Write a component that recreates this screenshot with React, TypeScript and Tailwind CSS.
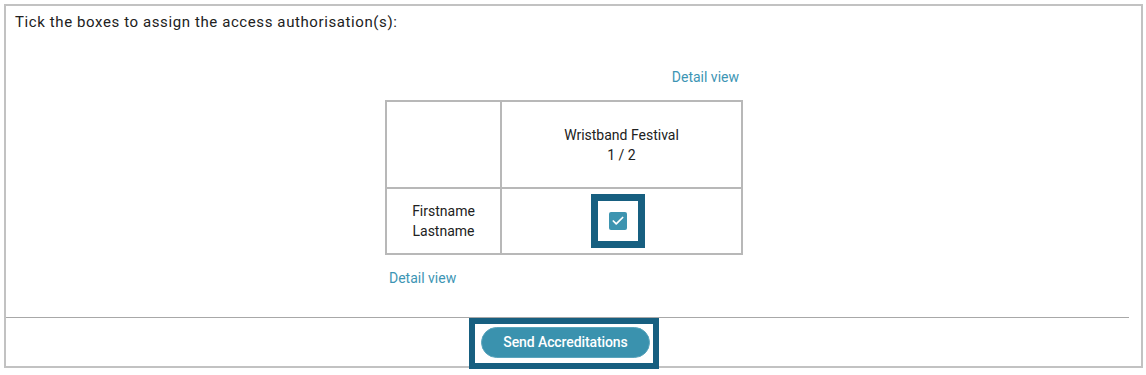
import { Check } from 'lucide-react';

const DetailLink = ({ align }: { align: 'left' | 'right' }) => (
  <div
    className={
      'text-[14px] leading-[20px] ' + (align === 'right' ? 'text-right pr-[4px]' : 'text-left pl-[4px]')
    }
  >
    <a href="#" className="text-[#3d95b4]">
      Detail view
    </a>
  </div>
);

export default function App() {
  return (
    <div className="w-[1146px] h-[375px] bg-white pt-[4px] pl-[4px] font-['Roboto',sans-serif] text-[#212121]">
      <div className="w-[1139px] h-[364px] border-2 border-[#c2c2c2] flex flex-col">
        <p className="pl-[9px] pt-[6px] text-[15px] leading-[20px] tracking-[0.6px]">
          Tick the boxes to assign the access authorisation(s):
        </p>

        <div className="flex flex-col items-center pr-[19px] mt-[35px]">
          <div className="w-[358px]">
            <DetailLink align="right" />

            <div className="mt-[13px] border-2 border-[#b8b8b8] text-[14px] leading-[20px] text-center">
              <div className="flex h-[87px] border-b-2 border-[#b8b8b8]">
                <div className="w-[115px] border-r-2 border-[#b8b8b8]" />
                <div className="flex-1 flex flex-col items-center justify-center">
                  <span>Wristband Festival</span>
                  <span>1 / 2</span>
                </div>
              </div>
              <div className="flex h-[64px]">
                <div className="w-[115px] border-r-2 border-[#b8b8b8] flex flex-col items-center justify-center">
                  <span>Firstname</span>
                  <span>Lastname</span>
                </div>
                <div className="flex-1 flex items-center justify-center pr-[8px]">
                  <div className="border-[7px] border-[#175f80] w-[54px] h-[54px] flex items-center justify-center">
                    <span className="w-[18px] h-[18px] rounded-[2px] bg-[#3d94b0] flex items-center justify-center">
                      <Check size={14} strokeWidth={3} className="text-white" />
                    </span>
                  </div>
                </div>
              </div>
            </div>

            <div className="mt-[13px]">
              <DetailLink align="left" />
            </div>
          </div>
        </div>

        <hr className="mt-[29px] mr-[12px] border-t border-[#a8a8a8]" />

        <div className="flex justify-center pr-[19px]">
          <div className="border-[6px] border-[#175f80] w-[190px] h-[51px] pt-[3px] pl-[6px]">
            <button className="w-[169px] h-[31px] rounded-full bg-[#3a92ae] border border-[#5aa5bd] text-white text-[14px] font-medium tracking-[-0.1px]">
              Send Accreditations
            </button>
          </div>
        </div>
      </div>
    </div>
  );
}
